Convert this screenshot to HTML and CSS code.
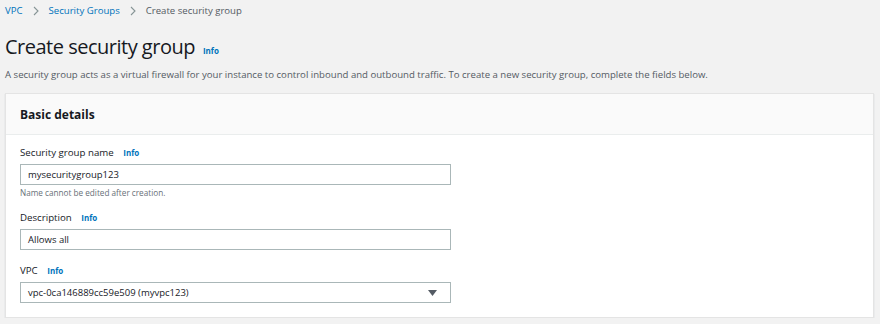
FILE: index.html
```html
<!DOCTYPE html>
<html lang="en">
<head>
    <meta charset="UTF-8">
    <title>Create security group</title>
    <link rel="stylesheet" href="styles.css">
</head>
<body>
    <nav class="breadcrumbs">
        <a href="#">VPC</a>
        <svg class="sep" width="6" height="10" viewBox="0 0 6 10"><path d="M1 1 L5 5 L1 9" fill="none" stroke="#879596" stroke-width="1.1"/></svg>
        <a href="#">Security Groups</a>
        <svg class="sep" width="6" height="10" viewBox="0 0 6 10"><path d="M1 1 L5 5 L1 9" fill="none" stroke="#879596" stroke-width="1.1"/></svg>
        <span class="current">Create security group</span>
    </nav>

    <div class="page-head">
        <h1>Create security group</h1>
        <a href="#" class="info">Info</a>
    </div>
    <p class="intro">A security group acts as a virtual firewall for your instance to control inbound and outbound traffic. To create a new security group, complete the fields below.</p>

    <div class="card">
        <div class="card-header">
            <h2>Basic details</h2>
        </div>
        <div class="card-body">
            <div class="field">
                <label>Security group name <a href="#" class="info">Info</a></label>
                <div class="input">mysecuritygroup123</div>
                <div class="hint">Name cannot be edited after creation.</div>
            </div>
            <div class="field field-desc">
                <label>Description <a href="#" class="info">Info</a></label>
                <div class="input">Allows all</div>
            </div>
            <div class="field">
                <label>VPC <a href="#" class="info">Info</a></label>
                <div class="input select">
                    <span>vpc-0ca146889cc59e509 (myvpc123)</span>
                    <svg width="9" height="6" viewBox="0 0 9 6"><path d="M0 0 H9 L4.5 6 Z" fill="#545b64"/></svg>
                </div>
            </div>
        </div>
    </div>
</body>
</html>
```
FILE: styles.css
```css
body {
    margin: 0;
    padding: 0 6px 0 5px;
    background: #f2f2f2;
    font-family: 'Open Sans', 'Noto Sans', sans-serif;
    color: #16191f;
}

a {
    text-decoration: none;
    color: #0073bb;
}

/* Breadcrumbs */
.breadcrumbs {
    display: flex;
    align-items: center;
    height: 21px;
    font-size: 9.6px;
    color: #545b64;
}

.breadcrumbs .sep {
    margin: 0 10px 0 10px;
}

/* Header */
.page-head {
    display: flex;
    align-items: baseline;
    margin-top: 12px;
    height: 28px;
}

h1 {
    margin: 0;
    font-size: 20px;
    font-weight: 400;
    letter-spacing: -0.5px;
    line-height: 28px;
}

.info {
    font-size: 8px;
    font-weight: 700;
    margin-left: 8px;
}

.intro {
    margin: 7px 0 0;
    font-size: 9.6px;
    color: #545b64;
}

/* Card */
.card {
    margin-top: 12px;
    background: #fff;
    border: 1px solid #e4e4e4;
    box-shadow: 0 1px 1px rgba(0, 31, 63, 0.2);
}

.card-header {
    height: 40px;
    display: flex;
    align-items: center;
    padding: 0 14px;
    background: #fafafa;
    border-bottom: 1px solid #eaeded;
}

.card-header h2 {
    margin: 0;
    font-size: 12px;
    font-weight: 700;
}

.card-body {
    padding: 11px 14px 14px;
}

.field {
    margin-bottom: 13px;
}

.field-desc {
    margin-bottom: 14px;
}

.field:last-child {
    margin-bottom: 0;
}

.field label {
    display: block;
    font-size: 9.7px;
    line-height: 14px;
    margin-bottom: 4px;
    color: #16191f;
}

.field label .info {
    margin-left: 7px;
}

.input {
    width: 431px;
    height: 21px;
    box-sizing: border-box;
    border: 1px solid #aab7b8;
    padding: 0 7px;
    display: flex;
    align-items: center;
    font-size: 9.5px;
    color: #16191f;
    background: #fff;
}

.select {
    justify-content: space-between;
}

.select svg {
    margin-right: 6px;
}

.hint {
    font-size: 8.2px;
    line-height: 10px;
    color: #687078;
    margin-top: 3px;
}
```
